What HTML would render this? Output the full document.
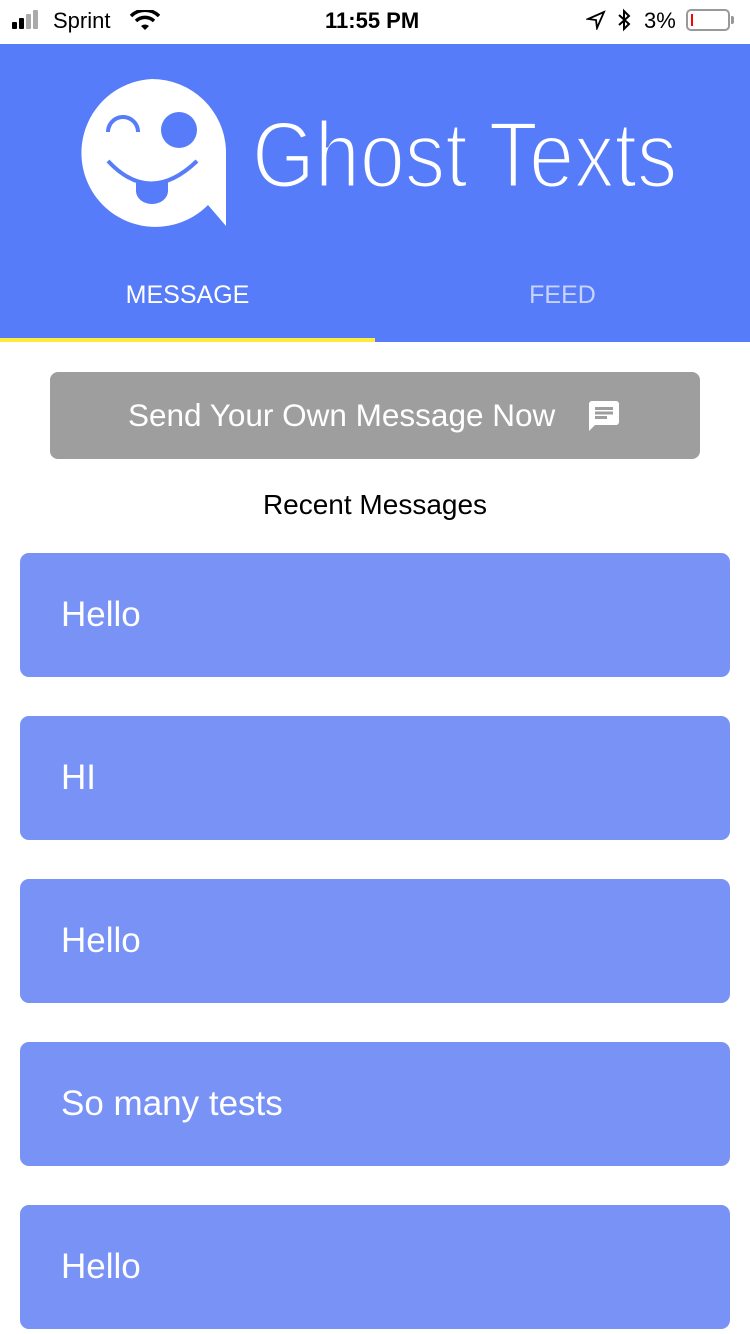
<!DOCTYPE html>
<html><head><style>
body{margin:0;width:750px;height:1334px;overflow:hidden;background:#fff;font-family:"Liberation Sans",sans-serif;position:relative}
.sb{position:absolute;top:0;left:0;width:750px;height:44px;background:#fff;font-size:22px;color:#000}
.hdr{position:absolute;top:44px;left:0;width:750px;height:298px;background:#567cfa}
.tab{position:absolute;top:237px;font-size:25px;color:#fff;width:375px;text-align:center}
.btn{position:absolute;left:50px;top:372px;width:650px;height:87px;background:#9e9e9e;border-radius:8px;color:#fff;font-size:31.5px;line-height:87px}
.card{position:absolute;left:20px;width:710px;height:124px;background:#7892f6;border-radius:9px;color:#fff;font-size:35px;line-height:124px;text-indent:41px}
</style></head><body>
<div class="sb">
<div style="position:absolute;left:12px;top:22px;width:5px;height:7px;background:#000;border-radius:1px"></div>
<div style="position:absolute;left:19px;top:18px;width:5px;height:11px;background:#000;border-radius:1px"></div>
<div style="position:absolute;left:26px;top:14px;width:5px;height:15px;background:#aaa;border-radius:1px"></div>
<div style="position:absolute;left:33px;top:10px;width:5px;height:19px;background:#aaa;border-radius:1px"></div>
<span style="position:absolute;left:53px;top:8px">Sprint</span>
<svg style="position:absolute;left:130px;top:10px" width="30" height="22" viewBox="0 0 30 22"><path d="M15 20 L11 16 A6 6 0 0 1 19 16Z" fill="#000"/><path d="M6 11 A13 13 0 0 1 24 11" stroke="#000" stroke-width="3.5" fill="none"/><path d="M1 6 A20 20 0 0 1 29 6" stroke="#000" stroke-width="3.5" fill="none"/></svg>
<span style="position:absolute;left:325px;top:8px;font-weight:bold">11:55 PM</span>
<svg style="position:absolute;left:586px;top:10px" width="20" height="20" viewBox="0 0 20 20"><path d="M18 2 L2 9 L10 10 L11 18 Z" fill="none" stroke="#000" stroke-width="1.8"/></svg>
<svg style="position:absolute;left:616px;top:8px" width="16" height="24" viewBox="0 0 16 24"><path d="M3 7 L13 16 L8 21 V3 L13 8 L3 17" fill="none" stroke="#000" stroke-width="2"/></svg>
<span style="position:absolute;left:644px;top:8px">3%</span>
<div style="position:absolute;left:686px;top:9px;width:44px;height:22px;border:2px solid #999;border-radius:5px;box-sizing:border-box"><div style="position:absolute;left:3px;top:3px;width:2px;height:12px;background:#f00"></div></div>
<div style="position:absolute;left:731px;top:16px;width:3px;height:8px;background:#999;border-radius:0 2px 2px 0"></div>
</div>
<div class="hdr">
<svg style="position:absolute;left:76px;top:33px" width="154" height="152" viewBox="76 77 154 152">
<path d="M152 79 A74 74 0 1 0 208 205 L226 226 L226 150 A74 74 0 0 0 152 79Z" fill="#fff"/>
<path d="M108 132 A15 15 0 0 1 138 132" stroke="#567cfa" stroke-width="4" fill="none"/>
<circle cx="179" cy="130" r="18" fill="#567cfa"/>
<path d="M108 161 Q150 206 197 161" stroke="#567cfa" stroke-width="4" fill="none"/>
<path d="M136 181 L136 191 A16 13 0 0 0 168 191 L168 181 Q152 186 136 181Z" fill="#567cfa"/>
</svg>
<div style="position:absolute;left:252px;top:56px;font-size:94px;line-height:110px;color:#fff;white-space:nowrap;transform:scaleX(0.86);transform-origin:0 0;-webkit-text-stroke:3px #567cfa">Ghost Texts</div>
<div class="tab" style="left:0">MESSAGE</div>
<div class="tab" style="left:375px;color:#c8d4ff">FEED</div>
<div style="position:absolute;left:0;top:294px;width:375px;height:4px;background:#ffeb3b"></div>
</div>
<div class="btn"><span style="position:absolute;left:78px">Send Your Own Message Now</span>
<svg style="position:absolute;left:536px;top:26px" width="36" height="36" viewBox="0 0 24 24"><path d="M20 2H4c-1.1 0-2 .9-2 2v18l4-4h14c1.1 0 2-.9 2-2V4c0-1.1-.9-2-2-2zM6 9h12v2H6V9zm8 5H6v-2h8v2zm4-6H6V6h12v2z" fill="#fff"/></svg></div>
<div style="position:absolute;top:489px;width:750px;text-align:center;font-size:28px;color:#000">Recent Messages</div>
<div class="card" style="top:553px">Hello</div>
<div class="card" style="top:716px">HI</div>
<div class="card" style="top:879px">Hello</div>
<div class="card" style="top:1042px">So many tests</div>
<div class="card" style="top:1205px">Hello</div>
</body></html>
